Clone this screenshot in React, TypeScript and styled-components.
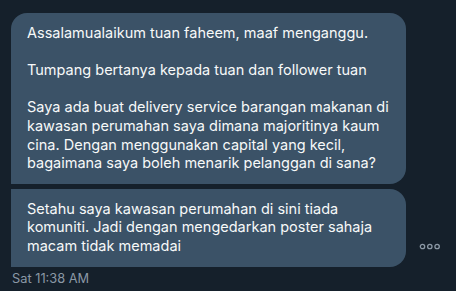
import React from "react";
import styled, { createGlobalStyle } from "styled-components";

const GlobalStyle = createGlobalStyle`
  html, body {
    margin: 0;
    padding: 0;
    background: #15202b;
  }
  body {
    font-family: Inter, "Noto Sans", "Liberation Sans", sans-serif;
    -webkit-font-smoothing: antialiased;
  }
`;

const Thread = styled.div`
  width: 456px;
  height: 291px;
  box-sizing: border-box;
  padding: 13px 0 0 11px;
  display: flex;
  flex-direction: column;
  overflow: hidden;
`;

const Group = styled.div`
  display: flex;
  flex-direction: column;
  gap: 5px;
`;

const Row = styled.div`
  display: flex;
  align-items: flex-end;
`;

const Bubble = styled.div<{ $first?: boolean }>`
  width: 395px;
  box-sizing: border-box;
  padding: 11px 16px 11px 16px;
  background: #3b5267;
  color: #f7f9f9;
  font-size: 14.5px;
  line-height: 18.6px;
  white-space: pre-line;
  border-radius: ${(p) => (p.$first ? "16px" : "0")} 16px 16px 0;
`;

const Blank = styled.div`
  height: 18.6px;
`;

const MoreButton = styled.button`
  margin: 0 0 17px 13px;
  padding: 0;
  border: 0;
  background: none;
  display: flex;
  align-items: center;
  color: #8b98a5;
  cursor: pointer;
`;

const Stamp = styled.div`
  margin-top: 4px;
  padding-left: 1px;
  color: #8b98a5;
  font-size: 12.8px;
  line-height: 16px;
`;

const Dots = () => (
  <svg width="22" height="7" viewBox="0 0 22 7" fill="none" stroke="currentColor" strokeWidth="1.3">
    <circle cx="3.5" cy="3.5" r="2.2" />
    <circle cx="10.8" cy="3.5" r="2.2" />
    <circle cx="18.1" cy="3.5" r="2.2" />
  </svg>
);

export default function App() {
  return (
    <>
      <GlobalStyle />
      <Thread>
        <Group>
          <Row>
            <Bubble $first>
              {"Assalamualaikum tuan faheem, maaf menganggu."}
              <Blank />
              {"Tumpang bertanya kepada tuan dan follower tuan"}
              <Blank />
              {"Saya ada buat delivery service barangan makanan di\nkawasan perumahan saya dimana majoritinya kaum\ncina. Dengan menggunakan capital yang kecil,\nbagaimana saya boleh menarik pelanggan di sana?"}
            </Bubble>
          </Row>
          <Row>
            <Bubble>
              {"Setahu saya kawasan perumahan di sini tiada\nkomuniti. Jadi dengan mengedarkan poster sahaja\nmacam tidak memadai"}
            </Bubble>
            <MoreButton aria-label="More">
              <Dots />
            </MoreButton>
          </Row>
        </Group>
        <Stamp>Sat 11:38 AM</Stamp>
      </Thread>
    </>
  );
}
